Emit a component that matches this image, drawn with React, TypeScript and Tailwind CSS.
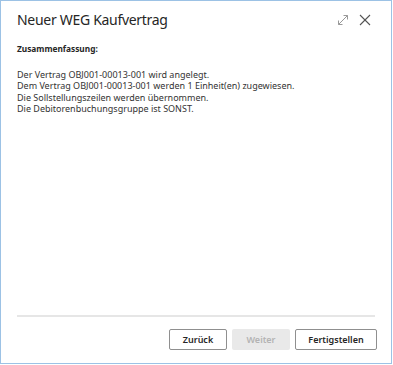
const lines = [
  'Der Vertrag OBJ001-00013-001 wird angelegt.',
  'Dem Vertrag OBJ001-00013-001 werden 1 Einheit(en) zugewiesen.',
  'Die Sollstellungszeilen werden übernommen.',
  'Die Debitorenbuchungsgruppe ist SONST.',
]

function ExpandIcon() {
  return (
    <svg width="12" height="12" viewBox="0 0 12 12" fill="none" stroke="#999" strokeWidth="1">
      <path d="M1.5 10.5 L10.5 1.5" />
      <path d="M6.5 1.5 H10.5 V5.5" />
      <path d="M1.5 6.5 V10.5 H5.5" />
    </svg>
  )
}

function CloseIcon() {
  return (
    <svg width="12" height="12" viewBox="0 0 12 12" fill="none" stroke="#555" strokeWidth="1.1">
      <path d="M1 1 L11 11" />
      <path d="M11 1 L1 11" />
    </svg>
  )
}

export default function App() {
  return (
    <div className="w-[393px] h-[365px] bg-white font-['Noto_Sans',sans-serif]">
      <div className="w-[392px] h-[364px] border border-[#9cc2e5] flex flex-col">
        {/* Header */}
        <div className="flex items-center justify-between pl-4 pr-[20px] pt-[8px]">
          <h1 className="text-[14px] leading-[22px] text-[#262626] tracking-[-0.3px]">
            Neuer WEG Kaufvertrag
          </h1>
          <div className="flex items-center gap-[10px]">
            <ExpandIcon />
            <CloseIcon />
          </div>
        </div>

        {/* Content */}
        <div className="px-4 pt-[11px] flex-1">
          <p className="text-[8.3px] font-bold text-[#262626] leading-[14px]">Zusammenfassung:</p>
          <div className="mt-[13px] text-[9px] leading-[11.3px] text-[#333]">
            {lines.map((l) => (
              <p key={l}>{l}</p>
            ))}
          </div>
        </div>

        {/* Footer */}
        <div className="mx-4 border-t-2 border-[#e6e6e6]" />
        <div className="flex justify-end gap-[5px] pr-[14px] pt-[12px] pb-[13px]">
          <button className="h-[21px] w-[58px] border border-[#8f8f8f] rounded-[2px] bg-white text-[9px] font-semibold text-[#262626]">
            Zurück
          </button>
          <button className="h-[21px] w-[58px] rounded-[2px] bg-[#e9e9e9] text-[9px] font-semibold text-[#b3b3b3]">
            Weiter
          </button>
          <button className="h-[21px] w-[82px] border border-[#8f8f8f] rounded-[2px] bg-white text-[9px] font-semibold text-[#262626]">
            Fertigstellen
          </button>
        </div>
      </div>
    </div>
  )
}
